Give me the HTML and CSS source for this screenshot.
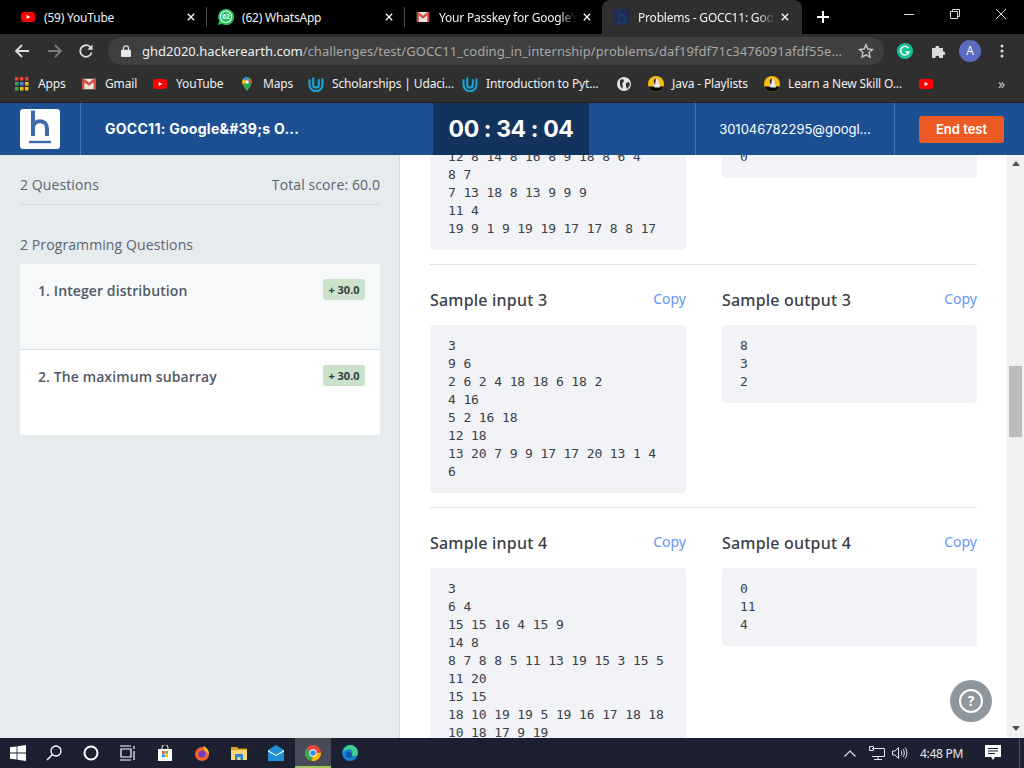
FILE: index.html
```html
<!DOCTYPE html>
<html lang="en">
<head>
<meta charset="utf-8">
<title>Problems - GOCC11</title>
<link rel="stylesheet" href="styles.css">
</head>
<body>
<svg class="defs" xmlns="http://www.w3.org/2000/svg">
  <symbol id="yt" viewBox="0 0 14 10"><rect width="14" height="10" rx="2.4" fill="#f00"/><path d="M5.6 2.9 9.4 5 5.6 7.1z" fill="#fff"/></symbol>
  <symbol id="gm" viewBox="0 0 14 11"><rect width="14" height="11" fill="#e8e4e0"/><path d="M0 0h1.8L7 4.2 12.200 0H14v11h-2.400V3.700L7 7.300 2.400 3.700V11H0z" fill="#d54c3f"/></symbol>
  <symbol id="ud" viewBox="0 0 16 16"><path d="M1.500 3.200v5.500a6.500 6.500 0 0 0 13 0V2.300M5.200 1.500v7.300a2.800 2.800 0 0 0 5.600 0V3.200" fill="none" stroke="#15a5d6" stroke-width="2.100"/></symbol>
  <symbol id="pg" viewBox="0 0 16 16"><circle cx="8" cy="8" r="8" fill="#f6bd0c"/><path d="M0.500 10.500h15A8 8 0 0 1 .5 10.500z" fill="#0b0b0b"/><path d="M8 2.500c2 0 2.500 1.500 2.500 3l1.500 6H6.500l-1-3c0-3 .5-6 2.500-6z" fill="#e8e8e8"/><path d="M8 2.500c-1.500 0-2.300 1.500-2.300 3.500L7 9z" fill="#222"/></symbol>
  <symbol id="cl" viewBox="0 0 10 10"><path d="M1 1l8 8M9 1l-8 8" stroke="#fff" stroke-width="1.600" fill="none"/></symbol>
</svg>

<div class="tabs">
  <div class="tab">
    <svg class="tab-ico" viewBox="0 0 14 10"><use href="#yt"/></svg>
    <span class="tab-text">(59) YouTube</span>
    <svg class="tab-x"><use href="#cl"/></svg>
  </div>
  <div class="tab sep">
    <svg class="tab-ico tall" viewBox="0 0 16 16"><path d="M8 0a8 8 0 0 0-6.900 12L0 16l4.200-1.100A8 8 0 1 0 8 0z" fill="#25c25a"/><circle cx="8" cy="7.800" r="6.200" fill="#fff"/><circle cx="8" cy="7.800" r="5.200" fill="#25c25a"/><text x="8" y="10.300" class="wa-num">62</text></svg>
    <span class="tab-text">(62) WhatsApp</span>
    <svg class="tab-x"><use href="#cl"/></svg>
  </div>
  <div class="tab sep">
    <svg class="tab-ico" viewBox="0 0 14 11"><use href="#gm"/></svg>
    <span class="tab-text fade">Your Passkey for Google's</span>
    <svg class="tab-x"><use href="#cl"/></svg>
  </div>
  <div class="tab active">
    <svg class="tab-ico tall" viewBox="0 0 16 16"><rect width="16" height="16" rx="1.500" fill="#1d2d52"/><path d="M5.500 2.500V12M5.500 8c0-3 5-3 5 0v4M4 14h8" stroke="#24396a" stroke-width="1.500" fill="none"/></svg>
    <span class="tab-text fade">Problems - GOCC11: Goo</span>
    <svg class="tab-x"><use href="#cl"/></svg>
  </div>
  <svg class="plus" viewBox="0 0 12 12"><path d="M6 0v12M0 6h12" stroke="#fff" stroke-width="2" fill="none"/></svg>
  <div class="win">
    <svg class="win-ico" viewBox="0 0 12 12"><path d="M1 6.500h10" stroke="#ddd" fill="none"/></svg>
    <svg class="win-ico" viewBox="0 0 12 12"><path d="M1.500 3.500h7v7h-7zM3.500 3.500v-2h7v7h-2" stroke="#ddd" fill="none"/></svg>
    <svg class="win-ico" viewBox="0 0 12 12"><path d="M1 1l10 10M11 1L1 11" stroke="#ddd" fill="none"/></svg>
  </div>
</div>

<div class="toolbar">
  <svg class="nav" viewBox="0 0 16 16"><path d="M15 8H2M8 2 2 8l6 6" stroke="#dcdcdc" stroke-width="1.800" fill="none"/></svg>
  <svg class="nav" viewBox="0 0 16 16"><path d="M1 8h13M8 2l6 6-6 6" stroke="#7a7a7a" stroke-width="1.800" fill="none"/></svg>
  <svg class="nav" viewBox="0 0 16 16"><path d="M13.600 9.500A5.800 5.800 0 1 1 12 3.800L14 6" stroke="#dcdcdc" stroke-width="1.800" fill="none"/><path d="M14.500 1.500v5.200H9.300z" fill="#dcdcdc"/></svg>
  <div class="omni">
    <svg class="lock" viewBox="0 0 10 12"><path d="M2.500 5V3.300a2.500 2.500 0 0 1 5 0V5" stroke="#e8e8e8" stroke-width="1.200" fill="none"/><rect y="4.800" width="10" height="7.200" rx="1" fill="#e8e8e8"/></svg>
    <span class="url"><span class="url-host">ghd2020.hackerearth.com</span>/challenges/test/GOCC11_coding_in_internship/problems/daf19fdf71c3476091afdf55e...</span>
    <svg class="star" viewBox="0 0 16 16"><path d="M8 1.800l1.900 4.200 4.600.5-3.400 3.100.9 4.500L8 11.800l-4 2.300.9-4.500L1.500 6.500 6.100 6z" stroke="#c8c8c8" stroke-width="1.400" fill="none"/></svg>
  </div>
  <svg class="ext ext-g" viewBox="0 0 16 16"><circle cx="8" cy="8" r="8" fill="#15c39a"/><path d="M11.500 5.200A4.300 4.300 0 1 0 12 9H8.500" stroke="#fff" stroke-width="1.500" fill="none"/></svg>
  <svg class="ext" viewBox="0 0 16 16"><path d="M1 5h3.500a1.800 1.800 0 1 1 3.500 0h4v3.500a1.800 1.800 0 1 1 0 3.500V15H8a1.800 1.800 0 1 0-3.500 0H1z" fill="#dadada"/></svg>
  <span class="avatar">A</span>
  <svg class="dots" viewBox="0 0 4 14"><circle cx="2" cy="2" r="1.500" fill="#dcdcdc"/><circle cx="2" cy="7" r="1.500" fill="#dcdcdc"/><circle cx="2" cy="12" r="1.500" fill="#dcdcdc"/></svg>
</div>

<div class="bookmarks">
  <div class="bm">
    <svg class="bm-ico" viewBox="0 0 14 14"><g fill="#e0433a"><rect width="3.500" height="3.500"/><rect x="5" width="3.500" height="3.500"/><rect x="10" width="3.500" height="3.500"/></g><g fill="#4285f4"><rect y="5" x="5" width="3.500" height="3.500"/></g><rect y="5" width="3.500" height="3.500" fill="#34a853"/><rect y="5" x="10" width="3.500" height="3.500" fill="#fbbc05"/><rect y="10" width="3.500" height="3.500" fill="#34a853"/><rect y="10" x="5" width="3.500" height="3.500" fill="#fbbc05"/><rect y="10" x="10" width="3.500" height="3.500" fill="#fbbc05"/></svg>
    <span>Apps</span>
  </div>
  <div class="bm"><svg class="bm-ico" viewBox="0 0 14 11"><use href="#gm"/></svg><span>Gmail</span></div>
  <div class="bm"><svg class="bm-ico" viewBox="0 0 14 10"><use href="#yt"/></svg><span>YouTube</span></div>
  <div class="bm">
    <svg class="bm-ico" viewBox="0 0 14 16"><path d="M7 0a5.600 5.600 0 0 0-5.600 5.600C1.400 9.500 7 16 7 16s5.600-6.500 5.600-10.400A5.600 5.600 0 0 0 7 0z" fill="#34a853"/><path d="M7 0a5.600 5.600 0 0 0-4.200 1.900l4.200 3.700z" fill="#4285f4"/><path d="M11 2 7 5.600l5.500 1a5.600 5.600 0 0 0-1.500-4.600z" fill="#ea4335"/><path d="M1.400 5.600c0 1 .3 2 .9 3L7 5.600 2.800 1.900a5.600 5.600 0 0 0-1.400 3.700z" fill="#fbbc05"/><circle cx="7" cy="5.600" r="2" fill="#fff"/></svg>
    <span>Maps</span>
  </div>
  <div class="bm"><svg class="bm-ico wide" viewBox="0 0 16 16"><use href="#ud"/></svg><span>Scholarships | Udaci...</span></div>
  <div class="bm"><svg class="bm-ico wide" viewBox="0 0 16 16"><use href="#ud"/></svg><span>Introduction to Pyt...</span></div>
  <div class="bm">
    <svg class="bm-ico" viewBox="0 0 14 14"><circle cx="7" cy="7" r="7" fill="#e4e4e4"/><path d="M3 3l3-1 1 2-2 3 1 2-1 3-2-4zM9 6l3-1 1 3-3 4-1-3z" fill="#2f2f2f"/></svg>
  </div>
  <div class="bm"><svg class="bm-ico wide" viewBox="0 0 16 16"><use href="#pg"/></svg><span>Java - Playlists</span></div>
  <div class="bm"><svg class="bm-ico wide" viewBox="0 0 16 16"><use href="#pg"/></svg><span>Learn a New Skill O...</span></div>
  <div class="bm"><svg class="bm-ico" viewBox="0 0 14 10"><use href="#yt"/></svg></div>
  <span class="more">»</span>
</div>

<header class="top">
  <div class="logo-cell">
    <svg class="logo" viewBox="0 0 40 40"><rect width="40" height="40" rx="3" fill="#fff"/><path d="M13 1.500V27M13 19c0-9 14-9 14 0v8" stroke="#3d6cae" stroke-width="4" fill="none"/><path d="M9 33h22" stroke="#3d6cae" stroke-width="2.400"/></svg>
  </div>
  <div class="contest">GOCC11: Google&amp;#39;s O...</div>
  <div class="timer">00 : 34 : 04</div>
  <div class="email">301046782295@googl...</div>
  <div class="end-cell"><button class="end">End test</button></div>
</header>

<div class="page">
  <aside class="side">
    <div class="side-head"><span>2 Questions</span><span>Total score: 60.0</span></div>
    <div class="side-sub">2 Programming Questions</div>
    <div class="q q-on"><span>1. Integer distribution</span><span class="score">+ 30.0</span></div>
    <div class="q"><span>2. The maximum subarray</span><span class="score">+ 30.0</span></div>
  </aside>
  <main class="main">
    <div class="samples">
      <section class="row row-first">
        <div class="col"><pre class="code">12 8 14 8 16 8 9 18 8 6 4
8 7
7 13 18 8 13 9 9 9
11 4
19 9 1 9 19 19 17 17 8 8 17</pre></div>
        <div class="col"><pre class="code">0</pre></div>
      </section>
      <section class="row">
        <div class="col">
          <div class="col-head"><h3>Sample input 3</h3><a class="copy">Copy</a></div>
          <pre class="code">3
9 6
2 6 2 4 18 18 6 18 2
4 16
5 2 16 18
12 18
13 20 7 9 9 17 17 20 13 1 4
6</pre>
        </div>
        <div class="col">
          <div class="col-head"><h3>Sample output 3</h3><a class="copy">Copy</a></div>
          <pre class="code">8
3
2</pre>
        </div>
      </section>
      <section class="row">
        <div class="col">
          <div class="col-head"><h3>Sample input 4</h3><a class="copy">Copy</a></div>
          <pre class="code">3
6 4
15 15 16 4 15 9
14 8
8 7 8 8 5 11 13 19 15 3 15 5
11 20
15 15
18 10 19 19 5 19 16 17 18 18
10 18 17 9 19</pre>
        </div>
        <div class="col">
          <div class="col-head"><h3>Sample output 4</h3><a class="copy">Copy</a></div>
          <pre class="code">0
11
4</pre>
        </div>
      </section>
    </div>
    <button class="help"><span class="help-ring">?</span></button>
  </main>
  <div class="scrollbar">
    <svg class="sb-arrow" viewBox="0 0 8 5"><path d="M4 0l4 5H0z" fill="#505050"/></svg>
    <div class="sb-thumb"></div>
    <svg class="sb-arrow sb-down" viewBox="0 0 8 5"><path d="M4 5l4-5H0z" fill="#505050"/></svg>
  </div>
</div>

<footer class="taskbar">
  <svg class="tb tb-win" viewBox="0 0 16 16"><path d="M0 2.300l6.600-.9v6.200H0zM7.400 1.300 16 0v7.600H7.400zM0 8.400h6.600v6.200L0 13.700zM7.400 8.400H16V16l-8.600-1.300z" fill="#fff"/></svg>
  <svg class="tb" viewBox="0 0 16 16"><circle cx="10" cy="6" r="5" stroke="#fff" stroke-width="1.300" fill="none"/><path d="M6.500 9.500 1 15" stroke="#fff" stroke-width="1.500"/></svg>
  <svg class="tb" viewBox="0 0 16 16"><circle cx="8" cy="8" r="6.500" stroke="#fff" stroke-width="2" fill="none"/></svg>
  <svg class="tb" viewBox="0 0 16 16"><path d="M0 1h11M0 15h11M1 4h10v8H1zM14 1v3M14 6v9" stroke="#fff" stroke-width="1.200" fill="none"/></svg>
  <svg class="tb" viewBox="0 0 16 16"><path d="M1 4h14v12H1z" fill="#fff"/><path d="M5 4V2.500a3 3 0 0 1 6 0V4" stroke="#fff" fill="none"/><rect x="5" y="6" width="2.800" height="2.800" fill="#f25022"/><rect x="8.300" y="6" width="2.800" height="2.800" fill="#7fba00"/><rect x="5" y="9.300" width="2.800" height="2.800" fill="#00a4ef"/><rect x="8.300" y="9.300" width="2.800" height="2.800" fill="#ffb900"/></svg>
  <svg class="tb" viewBox="0 0 16 16"><circle cx="8" cy="9" r="7" fill="#f2622e"/><path d="M9 1c3 1 6 4 6 8l-4-3z" fill="#ffc234"/><circle cx="8" cy="9" r="3.500" fill="#6b3fc4"/></svg>
  <svg class="tb" viewBox="0 0 16 16"><path d="M0 2h6l1.500 1.500H16V6H0z" fill="#d9a520"/><path d="M0 5h16v10H0z" fill="#f8d775"/><path d="M4 9h8v6H9.500v-3h-3v3H4z" fill="#2b88d8"/></svg>
  <svg class="tb" viewBox="0 0 16 16"><path d="M0 5 8 0l8 5v11H0z" fill="#1f8fd6"/><path d="M0 5l8 5 8-5v1.500L8 11 0 6.500z" fill="#fff"/></svg>
  <div class="tb-active">
    <svg class="tb-chrome" viewBox="0 0 16 16"><circle cx="8" cy="8" r="8" fill="#e8453c"/><path d="M8 8 1 4a8 8 0 0 0 6 12z" fill="#34a853"/><path d="M8 8h8a8 8 0 0 1-9 8z" fill="#fbbc05"/><circle cx="8" cy="8" r="3.700" fill="#fff"/><circle cx="8" cy="8" r="2.800" fill="#4285f4"/></svg>
  </div>
  <svg class="tb tb-edge" viewBox="0 0 16 16"><circle cx="8" cy="8" r="8" fill="#1a7fd0"/><path d="M8 0a8 8 0 0 1 8 8c0 3-3 3.500-5 3-2-.5-2-2-1-3 1.500-1.500-1-4-4-3.500C3.500 5 2 6 1 8a8 8 0 0 1 7-8z" fill="#3fcf8e"/><circle cx="7" cy="10" r="3" fill="#0f5aa5"/></svg>
  <div class="tray">
    <svg class="tray-ico tray-up" viewBox="0 0 12 7"><path d="M.5 6.500 6 1l5.500 5.500" stroke="#e8e8e8" stroke-width="1.100" fill="none"/></svg>
    <svg class="tray-ico" viewBox="0 0 16 14"><path d="M3 2.500h12.500v8h-12.500M9 10.500v2.500M5 13.500h8M.5.500h4v4h-4z" stroke="#e8e8e8" fill="none"/></svg>
    <svg class="tray-ico" viewBox="0 0 16 14"><path d="M.5 5h2.500L6.500 1.500v11L3 9H.5zM9 4.500c1 1.500 1 3.500 0 5M11 3c1.700 2 1.700 6 0 8M13 1.500c2.500 3 2.500 8 0 11" stroke="#e8e8e8" fill="none"/></svg>
    <span class="clock">4:48 PM</span>
    <svg class="tray-note" viewBox="0 0 16 16"><path d="M0 0h16v12h-6l-2 3-2-3H0z" fill="#fff"/><path d="M3 3.500h10M3 6h10M3 8.500h7" stroke="#1c2030"/></svg>
    <span class="show-desk"></span>
  </div>
</footer>
</body>
</html>
```

FILE: styles.css
```css
* { box-sizing: border-box; }
html, body { margin: 0; height: 100%; overflow: hidden; }
body {
  display: flex;
  flex-direction: column;
  height: 768px;
  font-family: "Open Sans", "Noto Sans", sans-serif;
  background: #fff;
}
.defs { display: none; }

/* tab strip */
.tabs {
  flex: 0 0 34px;
  display: flex;
  align-items: center;
  padding-left: 8px;
  background: #000;
  color: #fff;
  font-size: 12px;
}
.tab {
  position: relative;
  flex: 0 0 198px;
  min-width: 0;
  height: 34px;
  display: flex;
  align-items: center;
  padding: 0 11px 0 13px;
  gap: 9px;
}
.tab.sep { padding-left: 12px; }
.tab.sep::before {
  content: "";
  position: absolute;
  left: 0;
  top: 7px;
  bottom: 7px;
  width: 1px;
  background: #4a4a4a;
}
.tab.active {
  flex-basis: 200px;
  background: #2f2f2f;
  border-radius: 8px 8px 0 0;
  padding: 0 13px 0 12px;
}
.tab-ico { flex: 0 0 14px; width: 14px; height: 10px; }
.tab-ico.tall { flex: 0 0 16px; height: 16px; margin-right: -1px; }
.wa-num { font: 700 6.500px "Open Sans", sans-serif; fill: #fff; text-anchor: middle; }
.tab-text {
  flex: 1;
  min-width: 0;
  white-space: nowrap;
  overflow: hidden;
  font-family: "Noto Sans", sans-serif;
  font-size: 12px;
  letter-spacing: -.2px;
  color: #f2f2f2;
}
.fade { -webkit-mask-image: linear-gradient(90deg, #000 88%, transparent 100%); mask-image: linear-gradient(90deg, #000 88%, transparent 100%); }
.tab-x { flex: 0 0 8px; width: 8px; height: 8px; margin-left: -3px; overflow: visible; }
.plus { width: 12px; height: 12px; margin-left: 15px; }
.win { margin-left: auto; display: flex; padding-right: 17px; gap: 34px; align-self: flex-start; padding-top: 8px; }
.win-ico { width: 12px; height: 12px; }

/* toolbar */
.toolbar {
  flex: 0 0 34px;
  display: flex;
  align-items: center;
  padding-left: 14px;
  background: #2f2f2f;
}
.nav { width: 16px; height: 16px; margin-right: 17px; }
.nav:nth-child(2) { margin-right: 15px; }
.nav:nth-child(3) { margin-right: 14px; }
.omni {
  flex: 0 0 776px;
  height: 28px;
  display: flex;
  align-items: center;
  padding-left: 13px;
  border-radius: 14px;
  background: #3f3f3f;
  color: #a8a8a8;
}
.lock { width: 10px; height: 12px; margin-right: 11px; flex: none; }
.url { flex: 1; white-space: nowrap; overflow: hidden; font-family: "Noto Sans", sans-serif; font-size: 13px; letter-spacing: .05px; }
.url-host { color: #f0f0f0; letter-spacing: 0; }
.star { width: 16px; height: 16px; margin: 0 10px 0 8px; flex: none; }
.ext { width: 16px; height: 16px; margin-left: 18px; flex: none; }
.ext-g { margin-left: 13px; }
.avatar {
  width: 22px;
  height: 22px;
  margin-left: 12px;
  flex: none;
  border-radius: 50%;
  background: #5c6bc0;
  color: #fff;
  font-size: 12px;
  line-height: 22px;
  text-align: center;
}
.dots { width: 4px; height: 14px; margin-left: 19px; flex: none; }

/* bookmarks */
.bookmarks {
  flex: 0 0 35px;
  display: flex;
  align-items: center;
  padding: 0 0 3px 15px;
  background: #2f2f2f;
  border-bottom: 1px solid #1f1f1f;
  color: #f0f0f0;
  font-family: "Noto Sans", sans-serif;
  font-size: 12px;
  letter-spacing: -.15px;
}
.bm { display: flex; align-items: center; gap: 9px; white-space: nowrap; min-width: 0; }
.bm:nth-child(1) { flex: 0 0 67px; }
.bm:nth-child(2) { flex: 0 0 71px; }
.bm:nth-child(3) { flex: 0 0 87px; }
.bm:nth-child(4) { flex: 0 0 68px; }
.bm:nth-child(5) { flex: 0 0 154px; }
.bm:nth-child(6) { flex: 0 0 155px; }
.bm:nth-child(7) { flex: 0 0 31px; }
.bm:nth-child(8) { flex: 0 0 116px; }
.bm:nth-child(9) { flex: 0 0 155px; }
.bm-ico { width: 14px; height: 14px; flex: none; }
.bm-ico.wide { width: 16px; height: 16px; margin-right: -1px; }
.more { margin-left: auto; margin-right: 19px; font-size: 14px; color: #ccc; }

/* page header */
.top {
  flex: 0 0 52px;
  display: flex;
  align-items: stretch;
  background: #1c5092;
  color: #fff;
  font-family: Inter, sans-serif;
}
.logo-cell { flex: 0 0 81px; padding: 6px 0 0 20px; border-right: 1px solid #4a76ad; }
.logo { width: 40px; height: 40px; display: block; }
.contest { flex: 0 0 352px; padding-left: 24px; font-size: 14px; font-weight: 700; line-height: 52px; letter-spacing: .27px; white-space: nowrap; }
.timer { flex: 0 0 156px; background: #13335f; text-align: center; font-size: 23px; font-weight: 700; line-height: 52px; letter-spacing: -.4px; }
.email { flex: 0 0 200px; margin-left: 106px; border-left: 1px solid #4a76ad; border-right: 1px solid #4a76ad; text-align: center; font-size: 13px; line-height: 52px; white-space: nowrap; }
.end-cell { flex: 1; display: flex; align-items: center; padding-left: 24px; }
.end {
  width: 85px;
  height: 27px;
  padding: 0;
  border: 0;
  border-radius: 3px;
  background: #ec5a24;
  color: #fff;
  font: 600 13px Inter, sans-serif;
}

/* content */
.page { position: relative; flex: 1; min-height: 0; display: flex; overflow: hidden; }
.side {
  flex: 0 0 400px;
  padding: 20px 19px 0 20px;
  background: #e6ebee;
  border-right: 1px solid #d4d8dc;
  color: #5a6472;
  font-size: 14px;
  letter-spacing: .1px;
}
.side-head {
  display: flex;
  justify-content: space-between;
  height: 30px;
  line-height: 20px;
  border-bottom: 1px solid #d5dade;
}
.side-sub { margin-top: 30px; line-height: 20px; height: 29px; }
.q {
  display: flex;
  justify-content: space-between;
  align-items: flex-start;
  height: 85px;
  padding: 15px 15px 0 18px;
  background: #fff;
  font-weight: 600;
  line-height: 24px;
  color: #505a68;
}
.q-on { height: 86px; background: #f7f8fa; border-bottom: 1px solid #dadde3; }
.score {
  width: 42px;
  height: 21px;
  border-radius: 3px;
  background: #cce1c9;
  color: #333c44;
  font-size: 11px;
  font-weight: 700;
  line-height: 21px;
  text-align: center;
  letter-spacing: 0;
}
.main { flex: 1; min-width: 0; overflow: hidden; background: #fff; }
.samples { margin-top: -19px; padding: 0 30px; }
.row {
  display: grid;
  grid-template-columns: 256px 255px;
  column-gap: 36px;
  padding-top: 24px;
  padding-bottom: 14px;
  border-bottom: 1px solid #dbe1e8;
  align-items: start;
}
.row-first { padding-top: 0; }
.row:last-child { border-bottom: 0; }
.col-head { display: flex; justify-content: space-between; align-items: center; height: 22px; margin-bottom: 14px; }
.col-head h3 { margin: 0; font-family: "Noto Sans", sans-serif; font-size: 16px; font-weight: 500; letter-spacing: .2px; color: #3b4047; }
.copy { margin-bottom: 4px; font-family: "Noto Sans", sans-serif; font-size: 14px; color: #6496f5; }
.code {
  margin: 0;
  padding: 12px 18px;
  border-radius: 4px;
  background: #f1f3f7;
  color: #3b4047;
  font-family: "DejaVu Sans Mono", monospace;
  font-size: 13px;
  letter-spacing: -.12px;
  line-height: 18px;
}
.help {
  position: absolute;
  left: 950px;
  top: 525px;
  width: 42px;
  height: 42px;
  padding: 9px;
  border: 0;
  border-radius: 50%;
  background: #8f979e;
}
.help-ring {
  display: block;
  width: 24px;
  height: 24px;
  border: 2px solid #fff;
  border-radius: 50%;
  color: #fff;
  font: 700 14px/20px "Open Sans", sans-serif;
  text-align: center;
}
.scrollbar {
  flex: 0 0 17px;
  display: flex;
  flex-direction: column;
  align-items: center;
  background: #f1f1f1;
}
.sb-arrow { width: 8px; height: 5px; margin-top: 6px; flex: none; }
.sb-thumb { width: 13px; height: 71px; margin-top: 200px; background: #bcbcbc; flex: none; }
.sb-down { margin-top: auto; margin-bottom: 7px; }

/* taskbar */
.taskbar {
  flex: 0 0 30px;
  display: flex;
  align-items: center;
  padding-left: 10px;
  background: #1c2030;
  color: #e8e8e8;
}
.tb { width: 16px; height: 16px; margin-right: 21px; flex: none; }
.tb-win { margin-right: 20px; }
.tb-active {
  flex: 0 0 36px;
  height: 30px;
  margin: 0 11px 0 -10px;
  display: flex;
  align-items: center;
  justify-content: center;
  background: #474b58;
  border-bottom: 2px solid #9cc65d;
}
.tb-chrome { width: 16px; height: 16px; margin-top: 2px; }
.tray { margin-left: auto; display: flex; align-items: center; font-family: "Noto Sans", sans-serif; font-size: 12px; letter-spacing: -.3px; }
.tray-ico { width: 16px; height: 14px; margin-right: 7px; }
.tray-up { width: 12px; height: 7px; margin-right: 13px; }
.clock { margin-left: 5px; width: 42px; white-space: nowrap; }
.tray-note { width: 16px; height: 16px; margin-left: 23px; }
.show-desk { width: 1px; height: 30px; margin-left: 18px; margin-right: 4px; background: #555; }
```
